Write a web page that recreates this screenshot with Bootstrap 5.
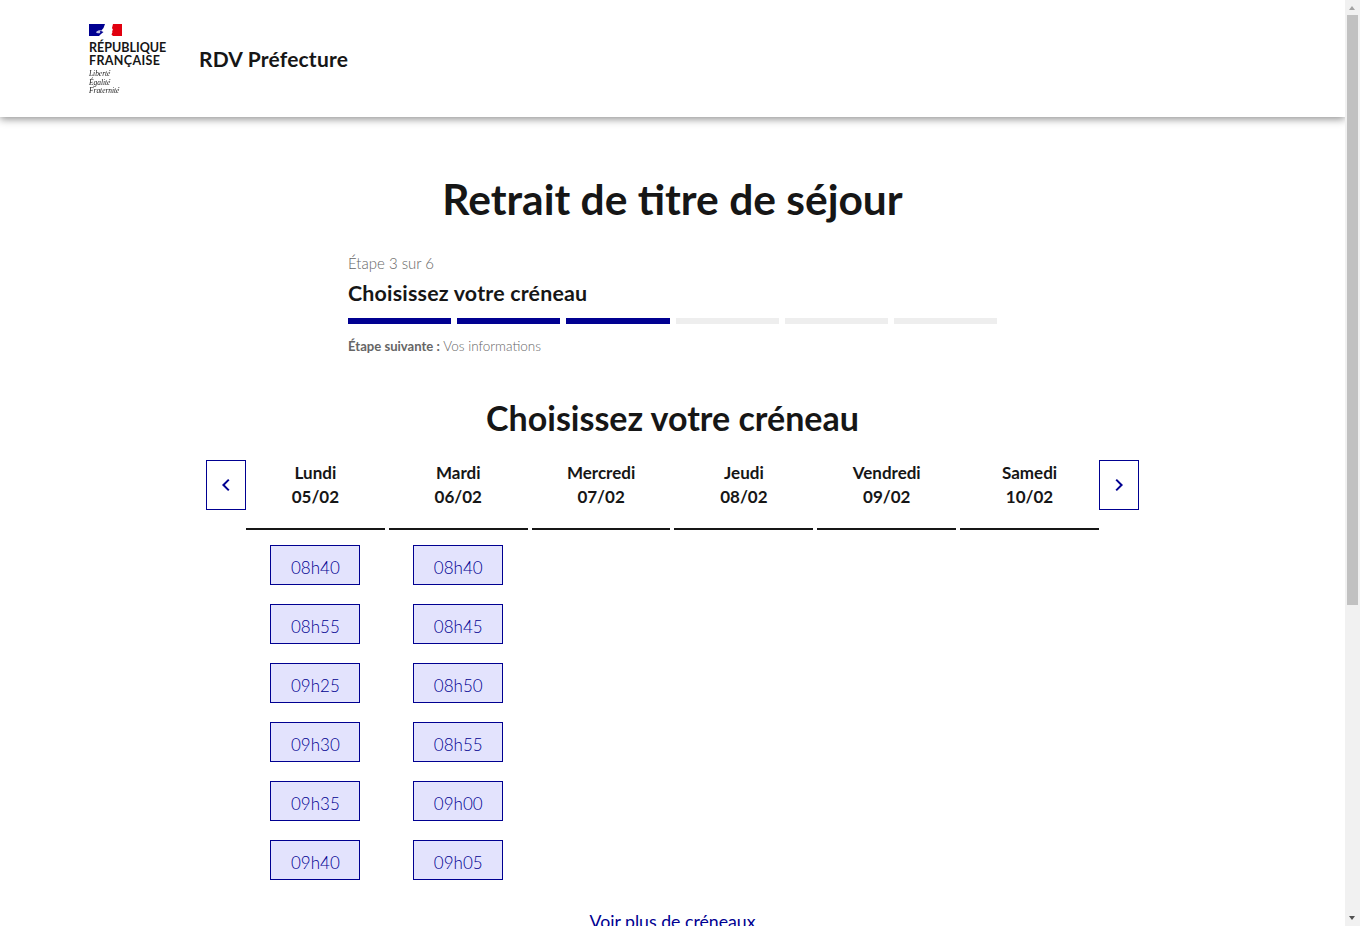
<!DOCTYPE html>
<html lang="fr">
<head>
<meta charset="utf-8">
<title>RDV Préfecture</title>
<link href="https://cdn.jsdelivr.net/npm/bootstrap@5.3.0/dist/css/bootstrap.min.css" rel="stylesheet">
<style>
body{font-family:"Lato","Liberation Sans",sans-serif;color:#161616;background:#fff;overflow:hidden}
.shell{height:926px}
.view{min-width:0;height:926px;overflow:hidden}
.sbar{width:15px;flex:none;background:#f1f1f1;height:926px}
.sbar-end{height:15px;flex:none}
.sbar-up{width:0;height:0;margin:6px 0 0 4px;border:3.5px solid transparent;border-top:0;border-bottom:4px solid #a3a3a3}
.sbar-down{width:0;height:0;margin:5px 0 0 4px;border:3.5px solid transparent;border-bottom:0;border-top:4px solid #505050}
.sbar-thumb{height:590px;margin:0 2px;background:#c1c1c1;flex:none}
.site-head{height:117px;box-shadow:0 2px 8px rgba(0,0,0,.45);padding-left:89px}
.logo-box{width:78px;margin-right:32px;padding-top:24px;height:117px}
.logo-flag{display:block;width:33px;height:12px;margin-bottom:5px}
.logo-name{font-size:12.5px;line-height:13px;font-weight:700;white-space:nowrap}
.logo-wide{letter-spacing:.35px}
.logo-motto{font-family:"Liberation Serif",serif;font-style:italic;font-size:7.4px;line-height:8.5px;margin-top:3px;color:#161616;will-change:transform}
.site-name{font-size:21px;font-weight:700;letter-spacing:.2px}
.page-title{font-size:42.5px;font-weight:700;line-height:48px;margin:58px 0 30px;text-align:center}
.stepper{width:649px}
.step-count{font-size:15px;line-height:20px;color:#666;margin-bottom:7px;font-weight:300}
.step-name{font-size:21.4px;line-height:26px;font-weight:700;margin-bottom:12px;letter-spacing:.2px}
.step-bars{gap:6px;height:6px;margin-bottom:13px}
.step-bar{flex:1 1 0;background:#eee}
.step-bar.done{background:#000091}
.step-next{font-size:13.1px;line-height:18px;color:#666}
.step-next span{font-weight:300;font-size:13.5px}
.slot-title{font-size:34px;line-height:40px;font-weight:700;text-align:center;margin:43px 0 22px}
.cal{width:933px}
.arrow-btn{width:40px;height:50px;flex:none;padding:0;background:#fff;border:1px solid #000091;border-radius:0;line-height:0}
.cal-col{flex:1 1 0;margin-right:4px;text-align:center}
.cal-col:last-of-type{margin-right:0}
.cal-day{height:70px;padding-top:1px;border-bottom:2px solid #161616;font-size:17px;line-height:24px;font-weight:700}
.cal-slots{padding-top:15px;gap:19px}
.slot-btn{width:90px;height:40px;background:#e3e3fd;color:#000091;border:1px solid #000091;border-radius:0;font-size:17px;line-height:24px;padding:6px 0 0;font-weight:300}
.more-row{margin-top:30px;text-align:center;font-size:17.7px;line-height:24px}
.more-row a{color:#000091;text-decoration:underline}
</style>
</head>
<body>
<div class="shell d-flex">
<div class="view flex-grow-1">
<header class="site-head d-flex align-items-center">
  <div class="logo-box">
    <svg class="logo-flag" viewBox="0 0 33 12">
      <path d="M0 0H16L14.5 4 12 7 14.5 8 12 10 10 12H0Z" fill="#000091"/>
      <path d="M19 12H24L22.5 10.5 23.5 8 23 7 24 6 23 4 24 0H33V12Z" fill="#e1000f"/>
      <path d="M7 8.2C8.5 6.5 10.5 6 12.5 6.5 11 7 10.5 8 11.5 8.8 10 9.6 8 9.5 7 8.2Z" fill="#fff" opacity=".75"/>
    </svg>
    <div class="logo-name">RÉPUBLIQUE<br><span class="logo-wide">FRANÇAISE</span></div>
    <div class="logo-motto">Liberté<br>Égalité<br>Fraternité</div>
  </div>
  <div class="site-name">RDV Préfecture</div>
</header>
<main>
  <h1 class="page-title">Retrait de titre de séjour</h1>
  <section class="stepper mx-auto">
    <div class="step-count">Étape 3 sur 6</div>
    <div class="step-name">Choisissez votre créneau</div>
    <div class="step-bars d-flex">
      <div class="step-bar done"></div><div class="step-bar done"></div><div class="step-bar done"></div>
      <div class="step-bar"></div><div class="step-bar"></div><div class="step-bar"></div>
    </div>
    <div class="step-next"><b>Étape suivante :</b> <span>Vos informations</span></div>
  </section>
  <h2 class="slot-title">Choisissez votre créneau</h2>
  <section class="cal mx-auto d-flex align-items-start">
    <button class="arrow-btn" type="button" aria-label="Précédent"><svg width="10" height="14" viewBox="0 0 10 14"><path d="M7.8 1.6 2.4 7l5.4 5.4" fill="none" stroke="#000091" stroke-width="2"/></svg></button>
    <div class="cal-col">
      <div class="cal-day">Lundi<br>05/02</div>
      <div class="cal-slots d-flex flex-column align-items-center">
        <button class="slot-btn" type="button">08h40</button>
        <button class="slot-btn" type="button">08h55</button>
        <button class="slot-btn" type="button">09h25</button>
        <button class="slot-btn" type="button">09h30</button>
        <button class="slot-btn" type="button">09h35</button>
        <button class="slot-btn" type="button">09h40</button>
      </div>
    </div>
    <div class="cal-col">
      <div class="cal-day">Mardi<br>06/02</div>
      <div class="cal-slots d-flex flex-column align-items-center">
        <button class="slot-btn" type="button">08h40</button>
        <button class="slot-btn" type="button">08h45</button>
        <button class="slot-btn" type="button">08h50</button>
        <button class="slot-btn" type="button">08h55</button>
        <button class="slot-btn" type="button">09h00</button>
        <button class="slot-btn" type="button">09h05</button>
      </div>
    </div>
    <div class="cal-col"><div class="cal-day">Mercredi<br>07/02</div></div>
    <div class="cal-col"><div class="cal-day">Jeudi<br>08/02</div></div>
    <div class="cal-col"><div class="cal-day">Vendredi<br>09/02</div></div>
    <div class="cal-col"><div class="cal-day">Samedi<br>10/02</div></div>
    <button class="arrow-btn" type="button" aria-label="Suivant"><svg width="10" height="14" viewBox="0 0 10 14"><path d="M2.2 1.6 7.6 7l-5.4 5.4" fill="none" stroke="#000091" stroke-width="2"/></svg></button>
  </section>
  <div class="more-row"><a href="#">Voir plus de créneaux</a></div>
</main>
</div>
<div class="sbar d-flex flex-column" aria-hidden="true">
  <div class="sbar-end"><div class="sbar-up"></div></div>
  <div class="sbar-thumb"></div>
  <div class="flex-grow-1"></div>
  <div class="sbar-end"><div class="sbar-down"></div></div>
</div>
</div>
<script src="https://cdn.jsdelivr.net/npm/bootstrap@5.3.0/dist/js/bootstrap.bundle.min.js"></script>
</body>
</html>
